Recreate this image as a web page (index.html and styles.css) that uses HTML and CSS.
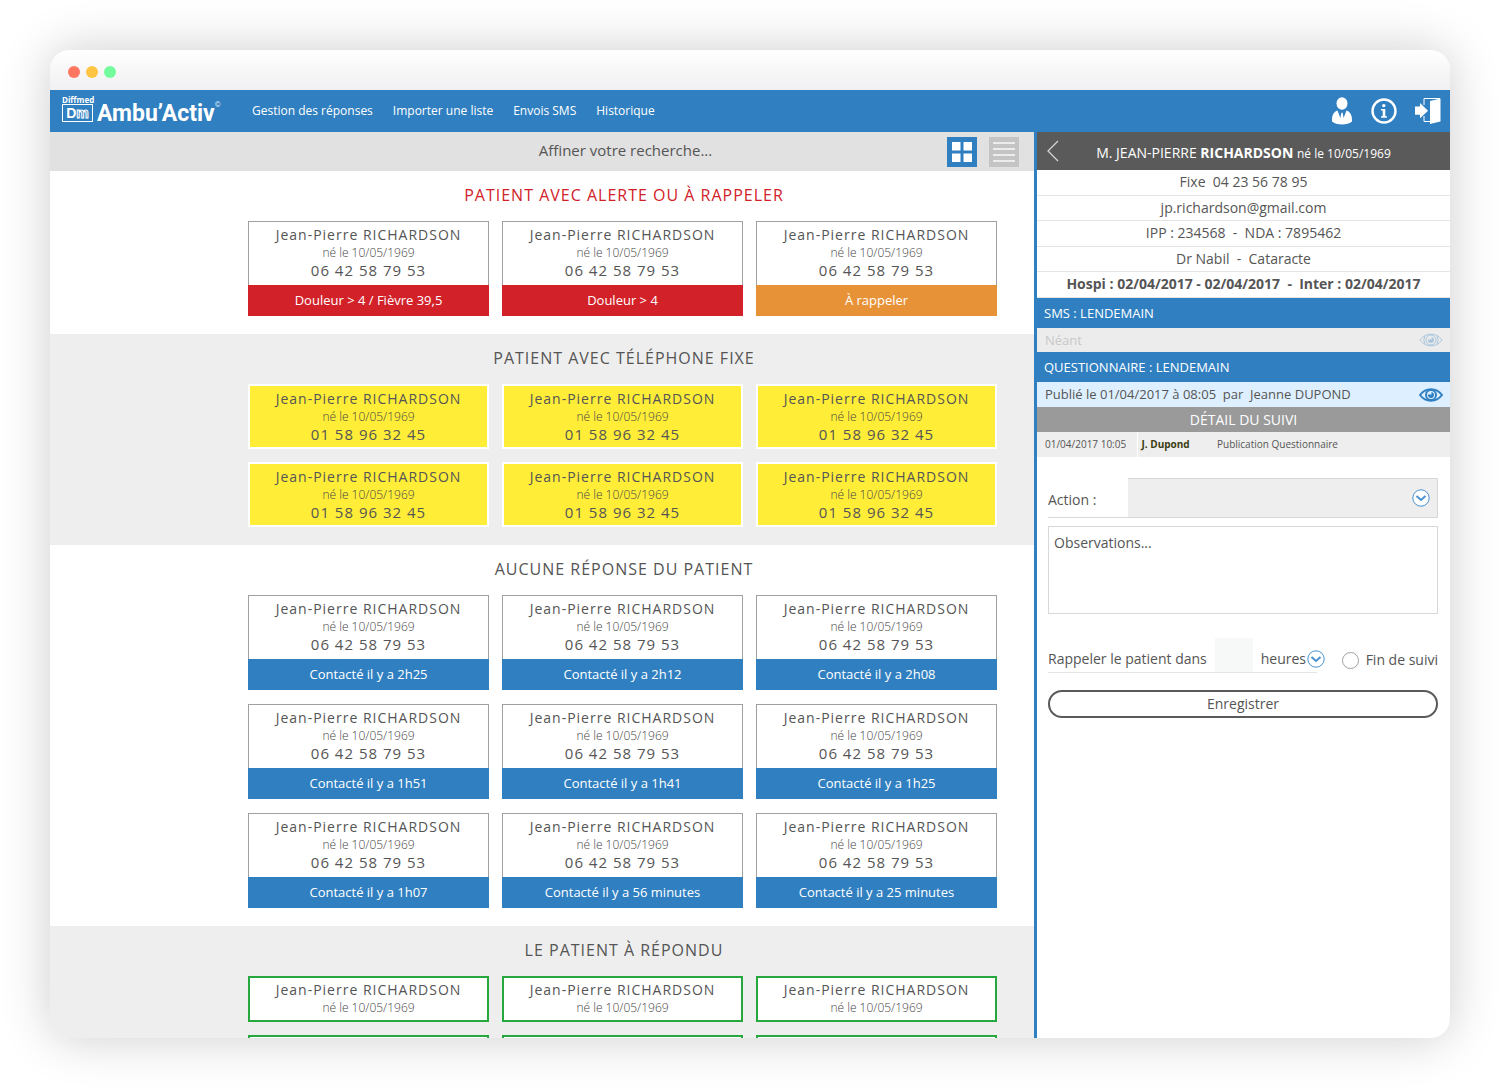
FILE: index.html
```html
<!DOCTYPE html>
<html lang="fr">
<head>
<meta charset="utf-8">
<meta name="viewport" content="width=device-width, initial-scale=1">
<title>Ambu’Activ</title>
<link rel="stylesheet" href="styles.css">
</head>
<body>
<div class="window">
  <div class="titlebar"><span class="dot dot-red"></span><span class="dot dot-yellow"></span><span class="dot dot-green"></span></div>

  <header class="navbar">
    <a class="brand" href="#">
      <span class="brand-mark"><span class="brand-company">Diffmed</span><span class="brand-box"><span>D</span><span class="brand-m">m</span></span></span>
      <span class="brand-name">Ambu’Activ</span><span class="brand-copy">©</span>
    </a>
    <nav class="menu">
      <a href="#">Gestion des réponses</a>
      <a href="#">Importer une liste</a>
      <a href="#">Envois SMS</a>
      <a href="#">Historique</a>
    </nav>
    <div class="tools">
      <button type="button" class="icon-button" aria-label="Profil">
        <svg width="22" height="28" viewBox="0 0 22 28" fill="#fff"><ellipse cx="11" cy="6.500" rx="5.500" ry="6.200"/><path d="M6.500 13.500C3 14.500 1 18 1 23v1.500C3 26.500 7 27.500 11 27.500s8-1 10-3V23c0-5-2-8.500-5.500-9.500L12.600 21l-.9-5.200h-1.400L9.400 21z"/></svg>
      </button>
      <button type="button" class="icon-button" aria-label="Informations">
        <svg width="26" height="26" viewBox="0 0 26 26"><circle cx="13" cy="13" r="11.500" fill="none" stroke="#fff" stroke-width="2.400"/><circle cx="12.800" cy="7.600" r="1.700" fill="#fff"/><path d="M10 11h4.300v7.300H16v1.500h-6v-1.500h1.700v-5.800H10z" fill="#fff"/></svg>
      </button>
      <button type="button" class="icon-button" aria-label="Quitter">
        <svg width="26" height="28" viewBox="0 0 26 28"><path d="M9 8V1.500h16" fill="none" stroke="#fff" stroke-width="1"/><path d="M9 19v5.500h6" fill="none" stroke="#fff" stroke-width="1"/><path d="M15 4l10.500-2.500v23L15 27z" fill="#fff"/><path d="M0 9.500h5V6l8 7.700-8 7.600v-3.500H0z" fill="#fff"/></svg>
      </button>
    </div>
  </header>

  <div class="content">
    <main class="board">
      <form class="search">
        <input class="search-input" type="search" aria-label="Recherche" placeholder="Affiner votre recherche...">
        <button type="button" class="view-button view-active" aria-label="Vue en grille">
          <svg width="30" height="30" viewBox="0 0 30 30" fill="#fff"><path d="M5 5h8.500v8.500H5zM16.500 5H25v8.500h-8.500zM5 16.500h8.500V25H5zM16.500 16.500H25V25h-8.500z"/></svg>
        </button>
        <button type="button" class="view-button" aria-label="Vue en liste">
          <svg width="30" height="30" viewBox="0 0 30 30"><path d="M4 6h22M4 12h22M4 18h22M4 24h22" stroke="#ececec" stroke-width="2"/></svg>
        </button>
      </form>

      <section class="group">
        <h2 class="group-title title-alert">PATIENT AVEC ALERTE OU À RAPPELER</h2>
        <div class="cards">
          <article class="card"><p class="name">Jean-Pierre RICHARDSON</p><p class="birth">né le 10/05/1969</p><p class="phone">06 42 58 79 53</p><p class="status status-alert">Douleur &gt; 4 / Fièvre 39,5</p></article>
          <article class="card"><p class="name">Jean-Pierre RICHARDSON</p><p class="birth">né le 10/05/1969</p><p class="phone">06 42 58 79 53</p><p class="status status-alert">Douleur &gt; 4</p></article>
          <article class="card"><p class="name">Jean-Pierre RICHARDSON</p><p class="birth">né le 10/05/1969</p><p class="phone">06 42 58 79 53</p><p class="status status-recall">À rappeler</p></article>
        </div>
      </section>

      <section class="group group-shaded">
        <h2 class="group-title">PATIENT AVEC TÉLÉPHONE FIXE</h2>
        <div class="cards">
          <article class="card card-landline"><p class="name">Jean-Pierre RICHARDSON</p><p class="birth">né le 10/05/1969</p><p class="phone">01 58 96 32 45</p></article>
          <article class="card card-landline"><p class="name">Jean-Pierre RICHARDSON</p><p class="birth">né le 10/05/1969</p><p class="phone">01 58 96 32 45</p></article>
          <article class="card card-landline"><p class="name">Jean-Pierre RICHARDSON</p><p class="birth">né le 10/05/1969</p><p class="phone">01 58 96 32 45</p></article>
          <article class="card card-landline"><p class="name">Jean-Pierre RICHARDSON</p><p class="birth">né le 10/05/1969</p><p class="phone">01 58 96 32 45</p></article>
          <article class="card card-landline"><p class="name">Jean-Pierre RICHARDSON</p><p class="birth">né le 10/05/1969</p><p class="phone">01 58 96 32 45</p></article>
          <article class="card card-landline"><p class="name">Jean-Pierre RICHARDSON</p><p class="birth">né le 10/05/1969</p><p class="phone">01 58 96 32 45</p></article>
        </div>
      </section>

      <section class="group">
        <h2 class="group-title">AUCUNE RÉPONSE DU PATIENT</h2>
        <div class="cards cards-spaced">
          <article class="card"><p class="name">Jean-Pierre RICHARDSON</p><p class="birth">né le 10/05/1969</p><p class="phone">06 42 58 79 53</p><p class="status">Contacté il y a 2h25</p></article>
          <article class="card"><p class="name">Jean-Pierre RICHARDSON</p><p class="birth">né le 10/05/1969</p><p class="phone">06 42 58 79 53</p><p class="status">Contacté il y a 2h12</p></article>
          <article class="card"><p class="name">Jean-Pierre RICHARDSON</p><p class="birth">né le 10/05/1969</p><p class="phone">06 42 58 79 53</p><p class="status">Contacté il y a 2h08</p></article>
          <article class="card"><p class="name">Jean-Pierre RICHARDSON</p><p class="birth">né le 10/05/1969</p><p class="phone">06 42 58 79 53</p><p class="status">Contacté il y a 1h51</p></article>
          <article class="card"><p class="name">Jean-Pierre RICHARDSON</p><p class="birth">né le 10/05/1969</p><p class="phone">06 42 58 79 53</p><p class="status">Contacté il y a 1h41</p></article>
          <article class="card"><p class="name">Jean-Pierre RICHARDSON</p><p class="birth">né le 10/05/1969</p><p class="phone">06 42 58 79 53</p><p class="status">Contacté il y a 1h25</p></article>
          <article class="card"><p class="name">Jean-Pierre RICHARDSON</p><p class="birth">né le 10/05/1969</p><p class="phone">06 42 58 79 53</p><p class="status">Contacté il y a 1h07</p></article>
          <article class="card"><p class="name">Jean-Pierre RICHARDSON</p><p class="birth">né le 10/05/1969</p><p class="phone">06 42 58 79 53</p><p class="status">Contacté il y a 56 minutes</p></article>
          <article class="card"><p class="name">Jean-Pierre RICHARDSON</p><p class="birth">né le 10/05/1969</p><p class="phone">06 42 58 79 53</p><p class="status">Contacté il y a 25 minutes</p></article>
        </div>
      </section>

      <section class="group group-shaded group-last">
        <h2 class="group-title">LE PATIENT À RÉPONDU</h2>
        <div class="cards">
          <article class="card card-answered"><p class="name">Jean-Pierre RICHARDSON</p><p class="birth">né le 10/05/1969</p></article>
          <article class="card card-answered"><p class="name">Jean-Pierre RICHARDSON</p><p class="birth">né le 10/05/1969</p></article>
          <article class="card card-answered"><p class="name">Jean-Pierre RICHARDSON</p><p class="birth">né le 10/05/1969</p></article>
          <article class="card card-answered"></article>
          <article class="card card-answered"></article>
          <article class="card card-answered"></article>
        </div>
      </section>
    </main>

    <aside class="panel">
      <header class="patient">
        <button type="button" class="icon-button" aria-label="Retour"><svg width="12" height="22" viewBox="0 0 12 22"><path d="M11 1L1 11l10 10" fill="none" stroke="#d4d4d4" stroke-width="1.300"/></svg></button>
        <h1 class="patient-name">M. JEAN-PIERRE <b>RICHARDSON</b> <small>né le 10/05/1969</small></h1>
      </header>
      <ul class="facts">
        <li>Fixe&nbsp; 04 23 56 78 95</li>
        <li>jp.richardson@gmail.com</li>
        <li>IPP : 234568&nbsp; -&nbsp; NDA : 7895462</li>
        <li>Dr Nabil&nbsp; -&nbsp; Cataracte</li>
        <li><b>Hospi : 02/04/2017 - 02/04/2017&nbsp; -&nbsp; Inter : 02/04/2017</b></li>
      </ul>
      <h2 class="bar">SMS : LENDEMAIN</h2>
      <div class="entry entry-empty"><span>Néant</span>
        <button type="button" class="icon-button" aria-label="Voir le SMS" disabled><svg class="eye" width="24" height="14" viewBox="0 0 24 14"><path d="M1 7C4 3 8 1.200 12 1.200S20 3 23 7c-3 4-7 5.800-11 5.800S4 11 1 7z"/><circle cx="12" cy="7" r="5"/><path class="pupil" d="M12.500 4v2.500H9A3 3 0 1 0 12.500 4z"/><path d="M6 3Q3.500 7 6 11M18 3Q20.500 7 18 11"/></svg></button>
      </div>
      <h2 class="bar">QUESTIONNAIRE : LENDEMAIN</h2>
      <div class="entry"><span>Publié le 01/04/2017 à 08:05&nbsp; par&nbsp; Jeanne DUPOND</span>
        <button type="button" class="icon-button" aria-label="Voir le questionnaire"><svg class="eye eye-strong" width="24" height="14" viewBox="0 0 24 14"><path d="M1 7C4 3 8 1.200 12 1.200S20 3 23 7c-3 4-7 5.800-11 5.800S4 11 1 7z"/><circle cx="12" cy="7" r="5"/><path class="pupil" d="M12.500 4v2.500H9A3 3 0 1 0 12.500 4z"/></svg></button>
      </div>
      <h2 class="detail-title">DÉTAIL DU SUIVI</h2>
      <table class="history">
        <tbody><tr><td class="when">01/04/2017 10:05</td><th scope="row">J. Dupond</th><td>Publication Questionnaire</td></tr></tbody>
      </table>

      <form class="follow-up">
        <div class="action-row">
          <label for="action">Action :</label>
          <div class="action-field">
            <select id="action"><option></option></select>
            <svg class="chevron" width="18" height="18" viewBox="0 0 18 18"><circle cx="9" cy="9" r="8.200"/><path d="M4.500 7L9 11l4.500-4"/></svg>
          </div>
        </div>
        <textarea class="notes" aria-label="Observations" placeholder="Observations..."></textarea>
        <div class="recall-row">
          <div class="recall">
            <label for="delay">Rappeler le patient dans</label>
            <input class="delay" id="delay" type="text">
            <div class="unit">
              <select aria-label="Unité"><option>heures</option></select>
              <svg class="chevron" width="18" height="18" viewBox="0 0 18 18"><circle cx="9" cy="9" r="8.200"/><path d="M4.500 7L9 11l4.500-4"/></svg>
            </div>
          </div>
          <label class="end"><input type="radio" name="end">Fin de suivi</label>
        </div>
        <button type="submit" class="save">Enregistrer</button>
      </form>
    </aside>
  </div>
</div>
</body>
</html>
```
FILE: styles.css
```css
* { box-sizing: border-box; }

body {
  margin: 0;
  padding: 50px;
  height: 100vh;
  background: #fff;
  color: #555;
  font: 14px/18px "Open Sans", "Noto Sans", sans-serif;
}

h1, h2, p, ul { margin: 0; padding: 0; font-weight: 400; }
button, input, select, textarea { font: inherit; color: inherit; margin: 0; }
svg { display: block; }

.window {
  display: flex;
  flex-direction: column;
  height: 100%;
  overflow: hidden;
  border-radius: 20px;
  background: #fff;
  box-shadow: 0 0 50px rgba(0, 0, 0, 0.2);
}

.titlebar {
  display: flex;
  flex: none;
  align-items: center;
  gap: 6px;
  height: 40px;
  padding: 3px 18px 0;
  background: linear-gradient(#fff, #f0f0f2);
}
.dot { width: 12px; height: 12px; border-radius: 50%; }
.dot-red { background: #ff7661; }
.dot-yellow { background: #ffc542; }
.dot-green { background: #74fb9b; }

.navbar {
  display: flex;
  flex: none;
  align-items: center;
  height: 42px;
  padding: 0 9px 0 12px;
  background: #307fc1;
  color: #fff;
}
.navbar a { color: inherit; text-decoration: none; }
.brand { display: flex; align-items: center; width: 190px; }
.brand-mark { display: flex; flex-direction: column; width: 31px; margin-right: 4px; padding-bottom: 4px; font-weight: 700; }
.brand-company { font-size: 8px; line-height: 8px; }
.brand-box {
  display: flex;
  justify-content: center;
  height: 18px;
  border: 1px solid #fff;
  font-family: "Liberation Sans", sans-serif;
  font-size: 14px;
  line-height: 16px;
}
.brand-m { color: transparent; -webkit-text-stroke: 1px #fff; }
.brand-name { padding-top: 6px; font: 700 23px/28px Roboto, sans-serif; }
.brand-name { padding-top: 6px; }
.brand-copy { align-self: flex-start; font-size: 7px; line-height: 22px; }
.menu { display: flex; flex: 1; gap: 20px; font-size: 12px; }
.tools { display: flex; align-items: center; gap: 18px; }
.icon-button { flex: none; padding: 0; border: 0; background: none; cursor: pointer; }

.content { display: flex; flex: 1; min-height: 0; }
.board { display: flex; flex: 1; flex-direction: column; min-width: 0; overflow: hidden; }
.search {
  display: flex;
  flex: none;
  align-items: center;
  gap: 12px;
  height: 39px;
  padding: 0 15px 0 280px;
  background: #e1e1e1;
}
.search-input {
  flex: 1;
  min-width: 0;
  padding: 0 0 3px;
  border: 0;
  outline: 0;
  background: none;
  font-size: 15px;
  text-align: center;
}
::placeholder { color: #555; opacity: 1; }
.view-button { padding: 0; border: 0; background: #c4c4c4; cursor: pointer; }
.view-active { background: #307fc1; }

.group { flex: none; padding: 13px 37px 18px 198px; }
.group-shaded { background: #eee; }
.group-last { flex: 1 0 auto; }
.group-title {
  margin-bottom: 15px;
  padding-left: 3px;
  font-size: 16px;
  line-height: 22px;
  letter-spacing: 1px;
  text-align: center;
}
.title-alert { color: #d22128; }
.cards { display: grid; grid-template-columns: repeat(3, 1fr); gap: 13px; }
.cards-spaced { row-gap: 14px; }
.card {
  padding-top: 4px;
  border: 1px solid #a0a0a0;
  border-bottom: 0;
  background: #fff;
  text-align: center;
}
.name { letter-spacing: 1px; }
.birth { color: #444; font-size: 12px; font-weight: 300; }
.phone { font-size: 15px; line-height: 16px; letter-spacing: 1px; }
.status {
  margin: 7px -1px 0;
  background: #307fc1;
  color: #fff;
  font-size: 13px;
  line-height: 31px;
}
.status-alert { background: #d22128; }
.status-recall { background: #e89237; }
.card-landline { padding-bottom: 5px; border: 2px solid #fff; background: #ffed38; }
.card-answered { min-height: 46px; padding: 3px 0; border: 2px solid #27a83f; }

.panel { flex: none; width: 416px; border-left: 3px solid #307fc1; }
.patient {
  display: flex;
  align-items: center;
  height: 38px;
  padding: 0 22px 0 10px;
  background: #5a5a5a;
  color: #fff;
}
.patient-name { flex: 1; padding-top: 4px; font-size: 14px; text-align: center; }
.patient-name small { font-size: 12px; }
.facts {
  display: grid;
  grid-auto-rows: 1fr;
  height: 128px;
  list-style: none;
  line-height: 24px;
  text-align: center;
}
.facts li { border-bottom: 1px solid #e4e4e4; }
.bar {
  padding: 0 7px;
  background: #307fc1;
  color: #fff;
  font-size: 13px;
  line-height: 30px;
}
.entry {
  display: flex;
  align-items: center;
  justify-content: space-between;
  padding: 0 7px 0 8px;
  background: #def0ff;
  font-size: 13px;
  line-height: 25px;
}
.entry-empty { background: #ececec; color: #c8c8c8; line-height: 24px; }
.eye { fill: none; stroke: #a9c6de; stroke-width: 1; }
.eye .pupil { fill: #a9c6de; stroke: none; }
.eye-strong { stroke: #307fc1; stroke-width: 2; }
.eye-strong .pupil { fill: #307fc1; }
.detail-title {
  background: #9a9a9a;
  color: #fff;
  font-size: 14px;
  line-height: 25px;
  text-align: center;
}
.history {
  width: 100%;
  border-collapse: collapse;
  table-layout: fixed;
  background: #eee;
  font-size: 10px;
  line-height: 25px;
  text-align: left;
}
.history td, .history th { padding: 0 0 0 4px; }
.history th { width: 76px; color: #3c3c10; }
.history .when { width: 100px; padding-left: 8px; border-right: 1px solid #fff; }

.follow-up { padding: 21px 12px 0 11px; }
.action-row { display: flex; height: 40px; border-bottom: 1px solid #d8d8d8; }
.action-row label { width: 80px; line-height: 44px; }
.action-field {
  display: grid;
  flex: 1;
  align-items: center;
  border: 1px solid #d8d8d8;
  border-width: 1px 1px 0 0;
}
.action-field select, .action-field svg { grid-area: 1 / 1; }
.action-field svg { justify-self: end; margin-right: 7px; pointer-events: none; }
.action-field select { width: 100%; height: 100%; background: #eee; }
select { appearance: none; padding: 0; border: 0; outline: 0; background: none; }
.chevron { fill: #fff; stroke: #4a92d0; stroke-width: 1; }
.chevron path { fill: none; stroke-width: 2; }
.notes {
  display: block;
  width: 100%;
  height: 88px;
  margin: 8px 0 24px;
  padding: 7px 5px;
  border: 1px solid #d8d8d8;
  outline: 0;
  resize: none;
}
.recall-row { display: flex; align-items: center; justify-content: space-between; }
.recall { display: flex; align-items: flex-end; height: 35px; border-bottom: 1px solid #e4e4e4; line-height: 26px; }
.delay { width: 38px; height: 34px; margin: 0 8px; padding: 0; border: 0; background: #f7f9f9; }
.unit { display: grid; grid-template-columns: 46px 18px; align-items: center; }
.unit select { height: 26px; }
.unit svg { margin-right: -8px; }
.recall .unit { margin-right: -8px; }
.end { display: flex; align-items: center; gap: 7px; padding-top: 9px; }
.end input { width: 17px; height: 17px; appearance: none; border: 1px solid #a0a0a0; border-radius: 50%; }
.save {
  display: block;
  width: 100%;
  height: 28px;
  margin-top: 17px;
  padding: 0;
  border: 2px solid #5a5a5a;
  border-radius: 14px;
  background: #fff;
}
```
